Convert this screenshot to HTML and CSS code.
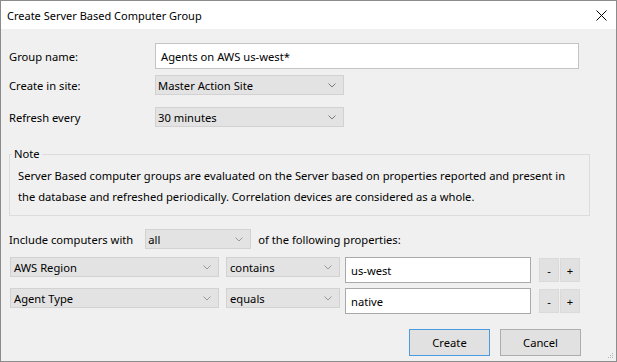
FILE: index.html
```html
<!DOCTYPE html>
<html>
<head>
<meta charset="utf-8">
<link rel="stylesheet" href="styles.css">
</head>
<body>
<div class="window">
  <div class="titlebar">
    <span class="title">Create Server Based Computer Group</span>
    <svg class="close" width="11" height="11" viewBox="0 0 11 11"><path d="M0.5 0.5 L10.5 10.5 M10.5 0.5 L0.5 10.5" stroke="#000" stroke-width="1" fill="none"/></svg>
  </div>
  <div class="content">
    <div class="row row-name">
      <span class="label">Group name:</span>
      <div class="textbox name-box">Agents on AWS us-west*</div>
    </div>
    <div class="row row-site">
      <span class="label">Create in site:</span>
      <div class="combo w-site"><span>Master Action Site</span><svg class="chev" width="8" height="5" viewBox="0 0 8 5"><path d="M0.5 0.5 L4 4 L7.5 0.5" stroke="#7a7a7a" fill="none"/></svg></div>
    </div>
    <div class="row row-refresh">
      <span class="label">Refresh every</span>
      <div class="combo w-site"><span>30 minutes</span><svg class="chev" width="8" height="5" viewBox="0 0 8 5"><path d="M0.5 0.5 L4 4 L7.5 0.5" stroke="#7a7a7a" fill="none"/></svg></div>
    </div>
    <fieldset class="note">
      <legend>Note</legend>
      <p>Server Based computer groups are evaluated on the Server based on properties reported and present in<br>the database and refreshed periodically. Correlation devices are considered as a whole.</p>
    </fieldset>
    <div class="include">
      <span>Include computers with</span>
      <div class="combo w-all"><span>all</span><svg class="chev" width="8" height="5" viewBox="0 0 8 5"><path d="M0.5 0.5 L4 4 L7.5 0.5" stroke="#9a9a9a" fill="none"/></svg></div>
      <span>of the following properties:</span>
    </div>
    <div class="prop">
      <div class="combo w-prop"><span>AWS Region</span><svg class="chev" width="8" height="5" viewBox="0 0 8 5"><path d="M0.5 0.5 L4 4 L7.5 0.5" stroke="#9a9a9a" fill="none"/></svg></div>
      <div class="combo w-op"><span>contains</span><svg class="chev" width="8" height="5" viewBox="0 0 8 5"><path d="M0.5 0.5 L4 4 L7.5 0.5" stroke="#9a9a9a" fill="none"/></svg></div>
      <div class="textbox val">us-west</div>
      <div class="pm"><button class="small">-</button><button class="small">+</button></div>
    </div>
    <div class="prop">
      <div class="combo w-prop"><span>Agent Type</span><svg class="chev" width="8" height="5" viewBox="0 0 8 5"><path d="M0.5 0.5 L4 4 L7.5 0.5" stroke="#9a9a9a" fill="none"/></svg></div>
      <div class="combo w-op"><span>equals</span><svg class="chev" width="8" height="5" viewBox="0 0 8 5"><path d="M0.5 0.5 L4 4 L7.5 0.5" stroke="#9a9a9a" fill="none"/></svg></div>
      <div class="textbox val">native</div>
      <div class="pm"><button class="small">-</button><button class="small">+</button></div>
    </div>
    <div class="footer">
      <button class="btn default">Create</button>
      <button class="btn">Cancel</button>
      <svg class="grip" width="7" height="7" viewBox="0 0 7 7"><g fill="#b5b5b5"><rect x="5" y="1" width="1" height="1"/><rect x="3" y="3" width="1" height="1"/><rect x="5" y="3" width="1" height="1"/><rect x="1" y="5" width="1" height="1"/><rect x="3" y="5" width="1" height="1"/><rect x="5" y="5" width="1" height="1"/></g></svg>
    </div>
  </div>
</div>
</body>
</html>
```

FILE: styles.css
```css
* { box-sizing: border-box; }
html, body { margin: 0; padding: 0; }
body {
  font-family: "Noto Sans", "Open Sans", sans-serif;
  font-size: 11.2px;
  color: #000;
  background: #fff;
}
.window {
  width: 617px;
  height: 362px;
  border: 1px solid #8c8c8c;
  background: #f0f0f0;
  display: flex;
  flex-direction: column;
}
.titlebar {
  height: 28px;
  flex: none;
  background: #fff;
  display: flex;
  align-items: center;
  justify-content: space-between;
  padding: 0 9px 0 6px;
}
.title { font-size: 11px; }
.close { display: block; }
.content {
  flex: 1;
  padding: 0 0 0 8px;
  display: flex;
  flex-direction: column;
  position: relative;
}
.row {
  display: flex;
  align-items: center;
}
.label { width: 146px; flex: none; }
.row-name { margin-top: 14px; }
.row-site { margin-top: 6px; }
.row-refresh { margin-top: 12px; }
.textbox {
  background: #fff;
  border: 1px solid #c4c4c4;
  display: flex;
  align-items: center;
  padding-left: 5px;
  white-space: nowrap;
}
.name-box { width: 424px; height: 26px; }
.combo {
  background: #e3e3e3;
  border: 1px solid #d2d2d2;
  height: 20px;
  display: flex;
  align-items: center;
  justify-content: space-between;
  padding: 0 7px 0 2px;
  white-space: nowrap;
}
.chev { display: block; }
.w-site { width: 189px; }
.note {
  margin: 20px 0 0 0;
  width: 581px;
  border: 1px solid #dcdcdc;
  padding: 0 0 0 2px;
  height: 69px;
}
.note legend {
  padding: 0 2px;
  line-height: 14px;
}
.note p {
  margin: 4px 0 0 6px;
  line-height: 21px;
  white-space: nowrap;
}
.include {
  display: flex;
  align-items: center;
  margin-top: 13px;
  height: 20px;
}
.w-all { width: 106px; margin: 0 7px 0 12px; padding-left: 2px; }
.prop {
  display: flex;
  align-items: flex-start;
  margin-top: 8px;
  height: 26px;
}
.prop + .prop { margin-top: 5px; }
.w-prop { width: 209px; margin-left: 1px; padding-left: 3px; }
.w-op { width: 114px; margin-left: 7px; padding-left: 3px; }
.val { width: 186px; height: 26px; margin-left: 5px; border-color: #a9a9a9; }
.pm { display: flex; margin: 1px 0 0 8px; gap: 1px; }
.small {
  width: 20px;
  height: 24px;
  border: 1px solid #dadada;
  background: #e1e1e1;
  font-family: inherit;
  font-size: 11.2px;
  padding: 0;
  color: #000;
}
.footer {
  display: flex;
  margin-top: 15px;
  padding-left: 400px;
  gap: 10px;
}
.btn {
  width: 81px;
  height: 27px;
  background: #e1e1e1;
  border: 1px solid #adadad;
  font-family: inherit;
  font-size: 11.2px;
  color: #000;
  padding: 0;
}
.btn.default { border-color: #4a9be0; }
.grip { position: absolute; right: 2px; bottom: 2px; }
```
